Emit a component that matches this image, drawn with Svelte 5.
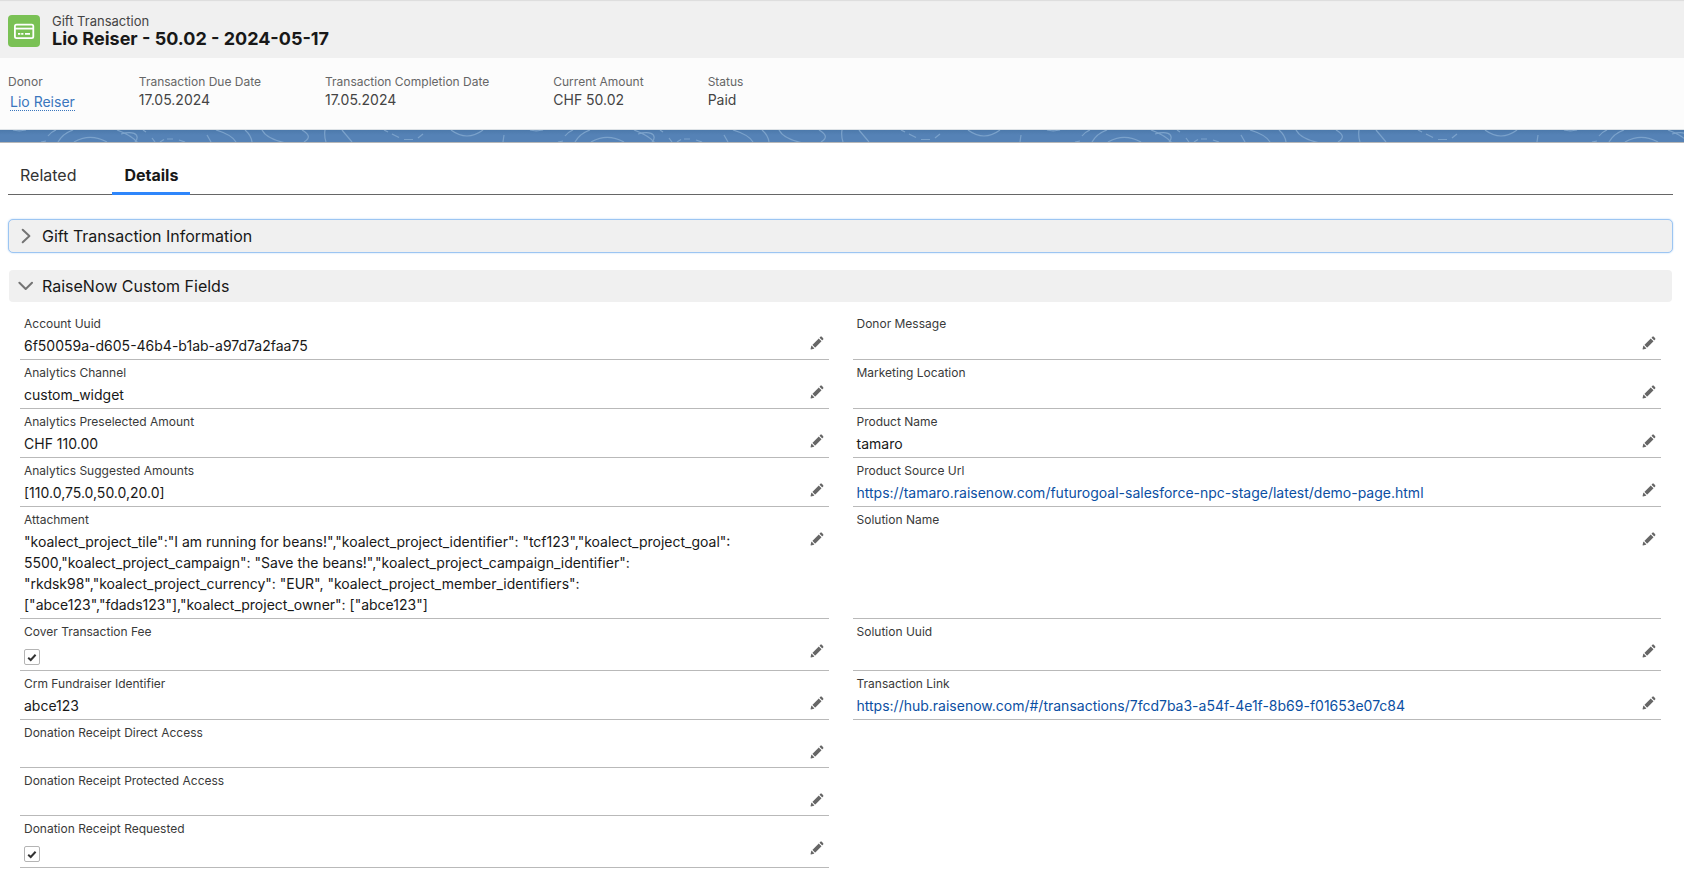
<script>
  const highlights = [
    { label: 'Donor', value: 'Lio Reiser', link: true },
    { label: 'Transaction Due Date', value: '17.05.2024' },
    { label: 'Transaction Completion Date', value: '17.05.2024' },
    { label: 'Current Amount', value: 'CHF 50.02' },
    { label: 'Status', value: 'Paid' },
  ];

  const attachment =
    '"koalect_project_tile":"I am running for beans!","koalect_project_identifier": "tcf123","koalect_project_goal": 5500,"koalect_project_campaign": "Save the beans!","koalect_project_campaign_identifier": "rkdsk98","koalect_project_currency": "EUR", "koalect_project_member_identifiers": ["abce123","fdads123"],"koalect_project_owner": ["abce123"]';

  // Each row holds the left field and, where there is one, the right field.
  const rows = [
    [{ label: 'Account Uuid', value: '6f50059a-d605-46b4-b1ab-a97d7a2faa75' }, { label: 'Donor Message' }],
    [{ label: 'Analytics Channel', value: 'custom_widget' }, { label: 'Marketing Location' }],
    [{ label: 'Analytics Preselected Amount', value: 'CHF 110.00' }, { label: 'Product Name', value: 'tamaro' }],
    [
      { label: 'Analytics Suggested Amounts', value: '[110.0,75.0,50.0,20.0]' },
      { label: 'Product Source Url', url: 'https://tamaro.raisenow.com/futurogoal-salesforce-npc-stage/latest/demo-page.html' },
    ],
    [{ label: 'Attachment', value: attachment }, { label: 'Solution Name' }],
    [{ label: 'Cover Transaction Fee', id: 'cover-fee', checked: true }, { label: 'Solution Uuid' }],
    [
      { label: 'Crm Fundraiser Identifier', value: 'abce123' },
      { label: 'Transaction Link', url: 'https://hub.raisenow.com/#/transactions/7fcd7ba3-a54f-4e1f-8b69-f01653e07c84' },
    ],
    [{ label: 'Donation Receipt Direct Access' }],
    [{ label: 'Donation Receipt Protected Access' }],
    [{ label: 'Donation Receipt Requested', id: 'receipt-requested', checked: true }],
  ];

  let fieldsOpen = $state(true);
</script>

{#snippet field(f)}
  <div class="field">
    <div class="content">
      {#if f.checked}
        <label class="label" for={f.id}>{f.label}</label>
        <span class="check">
          <input type="checkbox" id={f.id} checked disabled />
          <svg viewBox="0 0 16 16" aria-hidden="true"><path d="M4.2 8.8 L6.7 11 L11.6 5.8" /></svg>
        </span>
      {:else}
        <span class="label">{f.label}</span>
        {#if f.url}
          <a class="value" href={f.url}>{f.url}</a>
        {:else}
          <span class="value">{f.value ?? ''}</span>
        {/if}
      {/if}
    </div>
    <button class="edit" type="button" aria-label="Edit {f.label}">
      <svg viewBox="0 0 52 52" aria-hidden="true">
        <path d="M9.5 33.4l8.9 8.9c.4.4 1 .4 1.4 0L42 20c.4-.4.4-1 0-1.4l-8.8-8.8c-.4-.4-1-.4-1.4 0L9.5 32.1c-.4.4-.4 1 0 1.3zM36.1 5.7c-.4.4-.4 1 0 1.4l8.8 8.8c.4.4 1 .4 1.4 0l2.5-2.5c1.6-1.5 1.6-3.9 0-5.5l-4.7-4.7c-1.6-1.6-4.1-1.6-5.7 0l-2.3 2.5zM2.1 48.2c-.2 1 .7 1.9 1.7 1.7l10.9-2.6c.4-.1.7-.3.9-.5l.2-.2c.2-.2.3-.9-.1-1.3l-9-9c-.4-.4-1.1-.3-1.3-.1l-.2.2c-.3.3-.4.6-.5.9L2.1 48.2z" />
      </svg>
    </button>
  </div>
{/snippet}

<header class="page-header">
  <span class="object-icon">
    <svg viewBox="0 0 32 32" aria-hidden="true">
      <rect x="6.9" y="9.7" width="18.4" height="13.4" rx="1.6" />
      <path d="M7 13.6H25.4" />
      <path d="M10 18.9H12.3M13.2 18.9H15.4M17 18.9H22" />
    </svg>
  </span>
  <div class="heading">
    <span class="object-name">Gift Transaction</span>
    <h1>Lio Reiser - 50.02 - 2024-05-17</h1>
  </div>
</header>

<div class="highlights">
  {#each highlights as h}
    <div class="highlight">
      <span class="h-label">{h.label}</span>
      {#if h.link}
        <a class="donor" href="#donor">{h.value}</a>
      {:else}
        <span class="h-value">{h.value}</span>
      {/if}
    </div>
  {/each}
</div>

<div class="band">
  <svg width="100%" height="12" aria-hidden="true">
    <defs>
      <pattern id="contours" width="517" height="12" patternUnits="userSpaceOnUse">
        <g fill="none" stroke="#7ba2cb" stroke-width="1.2">
          <path d="M13 0Q19 1.6 26 0M41 12L46 11M48 6Q51 2 56 0M58 12C61 7 67 2 73 0" />
          <path d="M74 12Q90 2.6 107 12M117 0C125 3 133 7 138 13M121 4C126 2.6 131 2.4 134 3.4C138 5 138 9 135 12" />
          <path d="M143 0L146 2M152 8L155 12M160 12L164 9.6M167 9H173M179 10L185 12M207 5L211 12" />
          <path d="M216 0C226 3 233 7 236 12M245 0Q251 5 252 12M262 0C265 6 273 10 284 12.5" />
          <path d="M302 0C309 4 311 8 304 12M325 0Q324 6 326 12M342 0L352 12" />
          <path d="M384 0L388 2M392 4L399 7.5M404 9.5H413M418 8L423 4" />
          <path d="M451 0Q467 12 483 0M504 5L503 12" />
        </g>
      </pattern>
    </defs>
    <rect width="100%" height="12" fill="url(#contours)" />
  </svg>
</div>

<main>
  <nav class="tabs">
    <button type="button" class="tab">Related</button>
    <button type="button" class="tab active">Details</button>
  </nav>

  <button type="button" class="section focused" aria-expanded="false">
    <svg viewBox="0 0 16 16" aria-hidden="true"><path d="M5.7 1.8L12.4 8L5.7 14.2" /></svg>
    Gift Transaction Information
  </button>

  <button type="button" class="section" aria-expanded={fieldsOpen} onclick={() => (fieldsOpen = !fieldsOpen)}>
    <svg viewBox="0 0 16 16" aria-hidden="true"><path d="M2.4 4.7L8.7 11L15 4.7" /></svg>
    RaiseNow Custom Fields
  </button>

  {#if fieldsOpen}
    <div class="fields">
      {#each rows as [left, right]}
        <div class="row">
          {@render field(left)}
          {#if right}{@render field(right)}{/if}
        </div>
      {/each}
    </div>
  {/if}
</main>

<style>
  :global(body) {
    margin: 0;
    background: #fff;
    color: #181818;
    font-family: Inter, "Liberation Sans", sans-serif;
    font-size: 14px;
    line-height: 21px;
  }
  button {
    margin: 0;
    padding: 0;
    border: 0;
    background: none;
    color: inherit;
    font: inherit;
    cursor: pointer;
  }
  a {
    color: #0b4fa3;
    text-decoration: none;
  }

  .page-header {
    display: flex;
    align-items: center;
    gap: 12px;
    padding: 13px 8px 9px;
    background: #f0f0f0;
    box-shadow: inset 0 2px 1px -1px #dcdcdc;
  }
  .object-icon {
    display: block;
    width: 32px;
    height: 32px;
    border-radius: 4px;
    background: #7ac155;
  }
  .object-icon svg {
    display: block;
    fill: none;
    stroke: #fff;
    stroke-width: 1.8;
  }
  .heading {
    display: flex;
    flex-direction: column;
  }
  .object-name {
    color: #444;
    font-size: 13px;
    line-height: 16px;
  }
  h1 {
    margin: 0;
    font-size: 18px;
    font-weight: 700;
    line-height: 20px;
  }

  .highlights {
    display: flex;
    gap: 64px;
    padding: 15px 8px 18px;
    border-bottom: 1px solid #dde2e6;
    background: #fcfcfc;
  }
  .highlight {
    display: flex;
    flex-direction: column;
    align-items: flex-start;
  }
  .h-label {
    color: #666;
    font-size: 12px;
    line-height: 17px;
  }
  .h-value {
    color: #444;
    line-height: 20px;
  }
  .donor {
    margin: 3px 0 0 2px;
    border-bottom: 1px dotted #3a76bd;
    color: #3a76bd;
    line-height: 17px;
  }

  .band {
    border-bottom: 1px solid #b8b8b8;
    background: linear-gradient(#4c79ab, #5582b6 5px);
  }
  .band svg {
    display: block;
  }

  main {
    padding: 12px 11px 12px 8px;
  }
  .tabs {
    display: flex;
    gap: 24px;
    margin-bottom: 24px;
    border-bottom: 1px solid #666;
  }
  .tab {
    margin-bottom: -1px;
    padding: 4px 12px 0;
    border-bottom: 3px solid transparent;
    color: #333;
    font-size: 16px;
    line-height: 33px;
  }
  .tab.active {
    border-color: #2e86fb;
    color: #181818;
    font-weight: 700;
  }

  .section {
    display: flex;
    align-items: center;
    gap: 9px;
    box-sizing: border-box;
    width: 100%;
    margin-bottom: 16px;
    padding: 0 8px;
    border: 1px solid transparent;
    border-radius: 5px;
    background: #f0f0f0;
    background-clip: padding-box;
    font-size: 16px;
    line-height: 32px;
    text-align: left;
  }
  .section.focused {
    border-color: #9cc5f2;
    box-shadow: 0 0 2px #b4d4f6;
  }
  .section svg {
    width: 16px;
    height: 16px;
    fill: none;
    stroke: #747474;
    stroke-width: 2;
    stroke-linecap: round;
    stroke-linejoin: round;
  }

  .fields {
    margin-top: -8px;
    padding: 0 12px;
  }
  .row {
    display: grid;
    grid-template-columns: 1fr 1fr;
    column-gap: 24px;
  }
  .field {
    display: flex;
    align-items: flex-start;
    justify-content: space-between;
    gap: 16px;
    padding: 4px 5px 3px 4px;
    border-bottom: 1px solid #b9b9b9;
  }
  .content {
    display: flex;
    flex-direction: column;
    align-items: flex-start;
    gap: 2px;
    min-width: 0;
  }
  .label {
    color: #3a3a3a;
    font-size: 12px;
    line-height: 18px;
  }
  .value {
    min-height: 20px;
  }
  .check {
    display: grid;
    width: 16px;
    height: 16px;
    margin: 6px 0 2px;
  }
  .check input,
  .check svg {
    grid-area: 1 / 1;
    width: 16px;
    height: 16px;
  }
  .check input {
    box-sizing: border-box;
    margin: 0;
    border: 1px solid #b4b4b4;
    border-radius: 2px;
    background: #fff;
    appearance: none;
  }
  .check svg {
    fill: none;
    stroke: #333;
    stroke-width: 2;
    pointer-events: none;
  }
  .edit {
    flex: none;
    margin-top: 21px;
  }
  .edit svg {
    display: block;
    width: 14px;
    height: 14px;
    fill: #666;
  }
</style>
